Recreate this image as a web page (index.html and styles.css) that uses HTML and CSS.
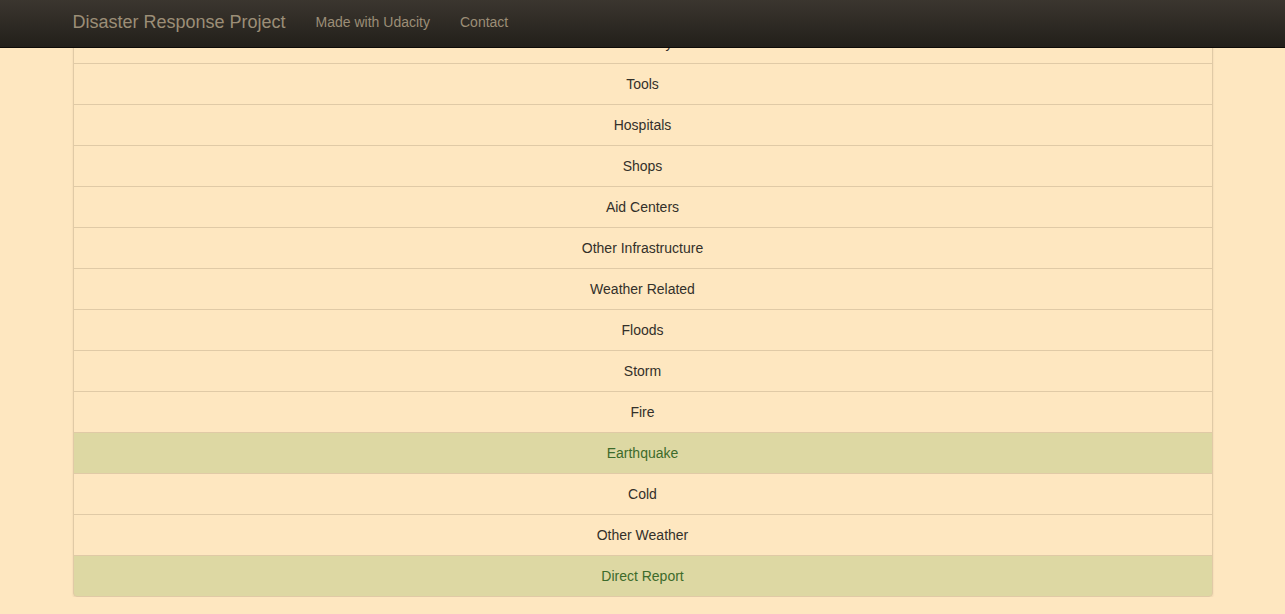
FILE: index.html
```html
<!DOCTYPE html>
<html lang="en">
<head>
<meta charset="utf-8">
<title>Disaster Response Project</title>
<link rel="stylesheet" href="styles.css">
</head>
<body>
<nav class="navbar">
  <div class="container nav-inner">
    <a class="brand" href="#">Disaster Response Project</a>
    <a class="nav-link" href="#">Made with Udacity</a>
    <a class="nav-link" href="#">Contact</a>
  </div>
</nav>
<main class="container main">
  <ul class="list-group">
    <li class="item">Electricity</li>
    <li class="item">Tools</li>
    <li class="item">Hospitals</li>
    <li class="item">Shops</li>
    <li class="item">Aid Centers</li>
    <li class="item">Other Infrastructure</li>
    <li class="item">Weather Related</li>
    <li class="item">Floods</li>
    <li class="item">Storm</li>
    <li class="item">Fire</li>
    <li class="item success">Earthquake</li>
    <li class="item">Cold</li>
    <li class="item">Other Weather</li>
    <li class="item success">Direct Report</li>
  </ul>
</main>
</body>
</html>
```

FILE: styles.css
```css
* { box-sizing: border-box; }
html, body { margin: 0; padding: 0; }
body {
  background: #fee7c0;
  font-family: "Liberation Sans", Arial, sans-serif;
  font-size: 14px;
  line-height: 20px;
  color: #33302a;
}
.container {
  width: 1170px;
  margin: 0 auto;
  padding: 0 15px;
}
.navbar {
  position: fixed;
  top: 0;
  left: 0;
  right: 0;
  height: 48px;
  background: linear-gradient(to bottom, #3b362f 0%, #221f1a 100%);
  border-bottom: 1px solid #0d0b08;
  z-index: 10;
}
.nav-inner {
  display: flex;
  align-items: flex-start;
  height: 100%;
}
.brand {
  font-size: 18px;
  line-height: 20px;
  padding: 12px 15px 0 0;
  color: #9c8e77;
  text-decoration: none;
}
.nav-link {
  font-size: 14px;
  line-height: 20px;
  padding: 12px 15px 0 15px;
  color: #9c8e77;
  text-decoration: none;
}
.main {
  padding-top: 22px;
}
.list-group {
  list-style: none;
  margin: 0;
  padding: 0;
  border-radius: 4px;
  box-shadow: 0 1px 2px rgba(80, 50, 10, 0.12);
}
.item {
  display: block;
  padding: 10px 15px;
  margin-bottom: -1px;
  border: 1px solid #e0caa6;
  background: #fee7c0;
  text-align: center;
}
.item:first-child {
  border-top-left-radius: 4px;
  border-top-right-radius: 4px;
}
.item:last-child {
  margin-bottom: 0;
  border-bottom-left-radius: 4px;
  border-bottom-right-radius: 4px;
}
.item.success {
  background: #ddd8a3;
  color: #3d6b2b;
}
```
